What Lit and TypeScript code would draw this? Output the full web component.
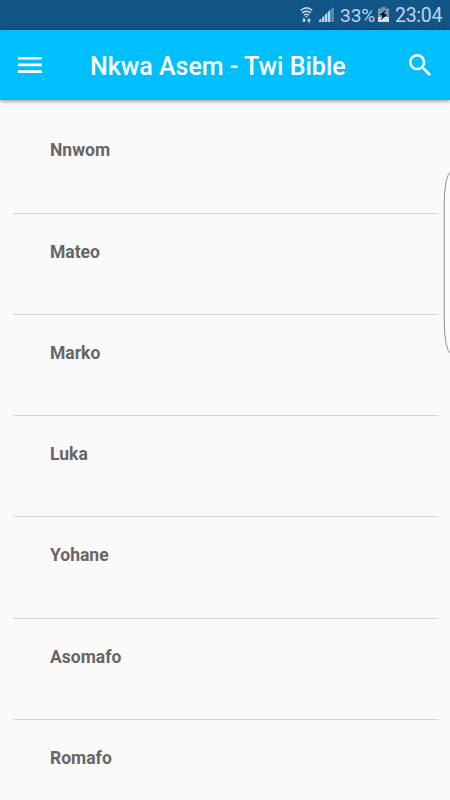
import { LitElement, html, css } from "lit";
import { customElement } from "lit/decorators.js";

@customElement("status-bar")
class StatusBar extends LitElement {
  static styles = css`
    :host {
      display: flex;
      box-sizing: border-box;
      height: 30px;
      align-items: center;
      justify-content: flex-end;
      padding-right: 8px;
      background: #125688;
      border-bottom: 1px solid #0b477b;
      color: #bdd5ea;
      font: 400 19.5px/30px Roboto, sans-serif;
    }
    svg { display: block; flex: none; }
    .wifi { margin-right: 6px; }
    .signal { margin-right: 6px; }
    .percent { width: 35px; white-space: nowrap; font-size: 19.2px; letter-spacing: -0.1px; }
    .battery { margin: 0 6px 0 3px; }
    .clock { width: 47px; white-space: nowrap; letter-spacing: -0.3px; }
    .text { padding-top: 2px; }
  `;
  render() {
    return html`
      <svg class="wifi" width="13" height="16" viewBox="0 0 13 16" fill="none" stroke="#bdd5ea">
        <path d="M.7 3.3Q6.5-1.5 12.3 3.3" stroke-width="1.5" />
        <path d="M2.2 5.9Q6.5 2.3 10.8 5.9" stroke-width="1.5" />
        <path d="M4 8.3Q6.5 6.1 9 8.3" stroke-width="1.5" />
        <path d="M5.1 9.1h2.8L6.5 10.8z" fill="#bdd5ea" stroke="none" />
        <path d="M3.2 10.9h1.6v2h1.4L4 15.4 1.8 12.9h1.4zM8.2 15.4v-2H6.8L9 10.9l2.2 2.5H9.8v2z" fill="#bdd5ea" stroke="none" />
      </svg>
      <svg class="signal" width="15" height="15" viewBox="0 0 15 15" fill="#bdd5ea">
        <path d="M0 15v-1.4l2.4-2.2V15zM3 15v-4.3l2.4-2.2V15zM6 15V7.8l2.4-2.2V15zM9 15V4.9l2.4-2.2V15z" />
        <path d="M12 15V2L15 0v15z" opacity=".4" />
      </svg>
      <span class="percent text">33%</span>
      <svg class="battery" width="11" height="15" viewBox="0 0 11 15">
        <path d="M3.5 0h4v1.5H11V15H0V1.5h3.5z" fill="#7197b7" />
        <path d="M0 10h11v5H0z" fill="#cfe0ef" />
        <path d="M8 2.5L2 7.7l2.8 1.1L2.6 13.3 9 7.8 6.1 6.7z" fill="#050b12" />
      </svg>
      <span class="clock text">23:04</span>
    `;
  }
}

@customElement("title-bar")
class TitleBar extends LitElement {
  static styles = css`
    :host {
      display: flex;
      box-sizing: border-box;
      height: 70px;
      align-items: center;
      padding: 0 18px;
      background: #00bfff;
      color: #fff;
      box-shadow: 0 1px 4px rgba(70, 20, 0, 0.5);
      z-index: 1;
    }
    svg { display: block; flex: none; }
    .title {
      flex: 1;
      margin: 0 0 0 48px;
      padding-top: 4px;
      white-space: nowrap;
      font: 500 25px/30px Roboto, sans-serif;
    }
    .search { margin: 0 1.5px 1px 0; }
  `;
  render() {
    return html`
      <svg width="24" height="16" viewBox="0 0 24 16" fill="#fff">
        <path d="M0 0h24v2.6H0zM0 6.6h24v2.6H0zM0 13.2h24v2.7H0z" />
      </svg>
      <h1 class="title">Nkwa Asem - Twi Bible</h1>
      <svg class="search" width="22" height="22" viewBox="3 3 17.5 17.5" fill="#fff">
        <path d="M15.5 14h-.79l-.28-.27A6.47 6.47 0 0 0 16 9.5 6.5 6.5 0 1 0 9.5 16c1.61 0 3.09-.59 4.23-1.57l.27.28v.79l5 4.99L20.49 19zm-6 0a4.5 4.5 0 1 1 0-9 4.5 4.5 0 0 1 0 9z" />
      </svg>
    `;
  }
}

@customElement("app-root")
class AppRoot extends LitElement {
  static styles = css`
    :host {
      display: flex;
      position: relative;
      flex-direction: column;
      width: 450px;
      height: 800px;
      overflow: hidden;
      background: #fafafa;
    }
    status-bar, title-bar { flex: none; }
    .list {
      flex: 1;
      min-height: 0;
      overflow: hidden;
      margin: 0;
      padding: 12.4px 12.5px 0;
      list-style: none;
    }
    .book {
      display: flow-root;
      box-sizing: border-box;
      height: 101.25px;
      border-bottom: 1px solid #d6d6d6;
      color: #666;
      font: 700 17.5px/24px Roboto, sans-serif;
    }
    .name { display: block; margin: 26px 0 0 37.5px; }
    .edge {
      position: absolute;
      top: 170px;
      right: 0;
      display: block;
    }
  `;
  private books = ["Nnwom", "Mateo", "Marko", "Luka", "Yohane", "Asomafo", "Romafo"];
  render() {
    return html`
      <status-bar></status-bar>
      <title-bar></title-bar>
      <ul class="list">
        ${this.books.map((b) => html`<li class="book"><span class="name">${b}</span></li>`)}
      </ul>
      <svg class="edge" width="7" height="186" viewBox="0 0 7 186">
        <path d="M8 1Q1.5 6 1.2 34V151Q1.5 179 8 184.5" fill="#fcfcfc" stroke="#858585" stroke-width=".9" />
      </svg>
    `;
  }
}
